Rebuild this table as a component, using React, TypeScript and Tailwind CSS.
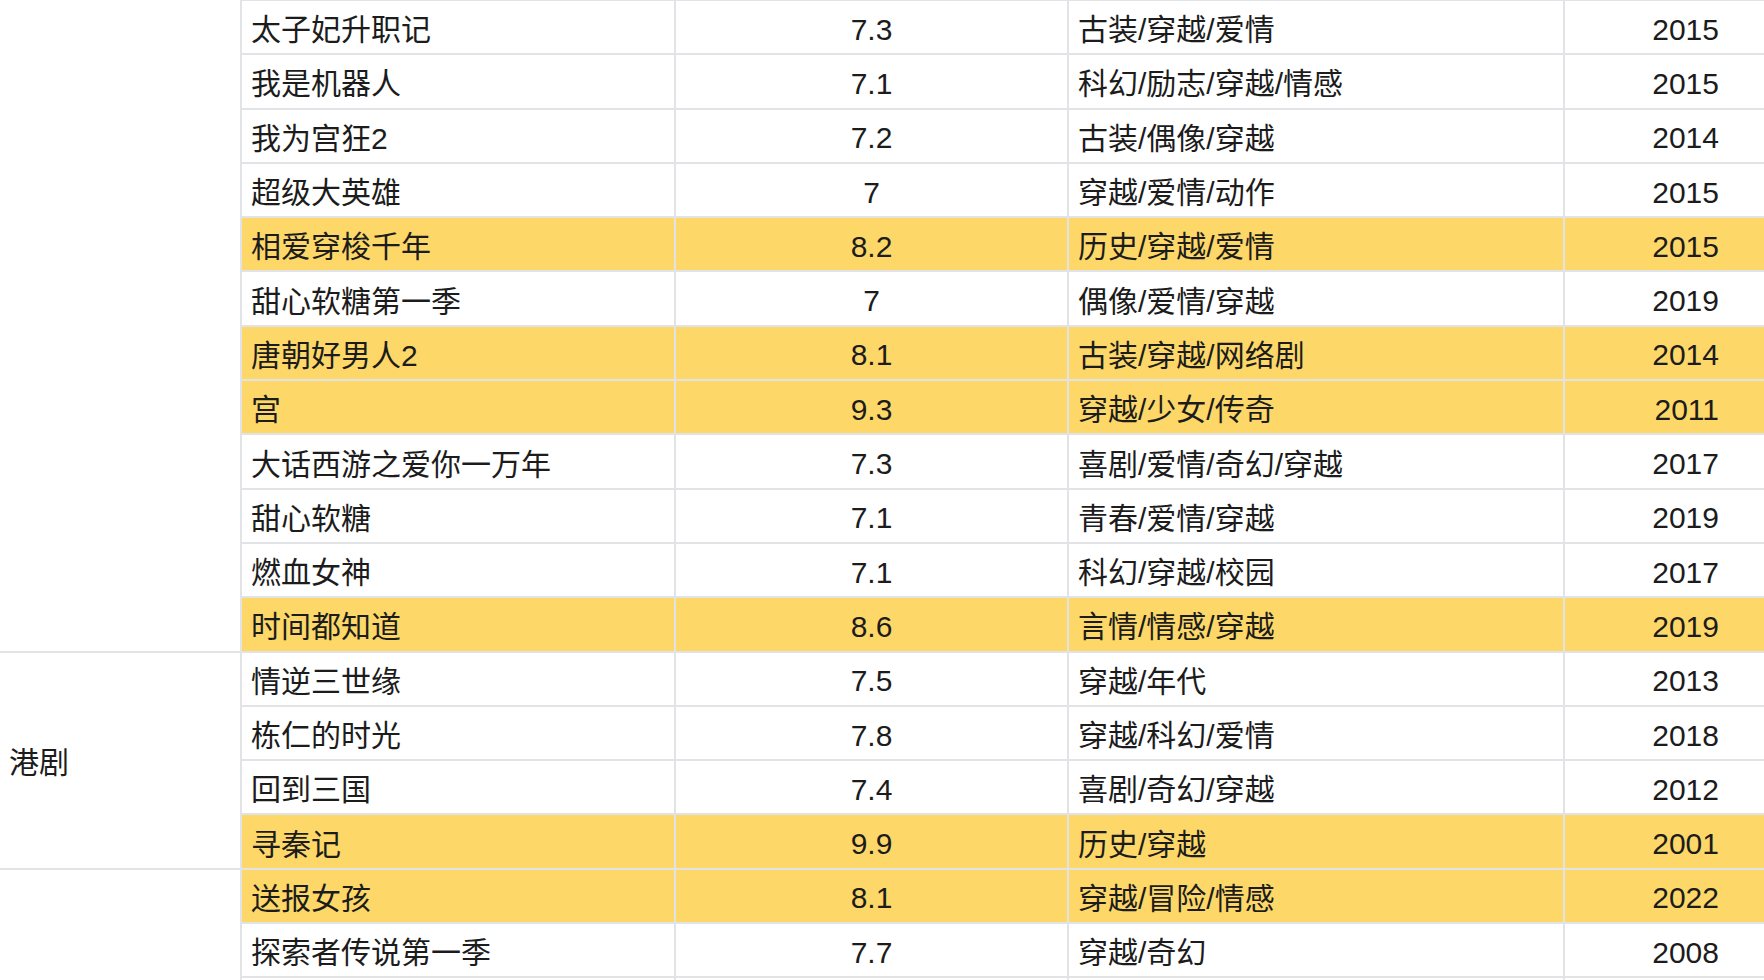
import React from "react";

type Row = { name: string; score: string; genre: string; year: string; hl?: boolean };

const rows: Row[] = [
  { name: "太子妃升职记", score: "7.3", genre: "古装/穿越/爱情", year: "2015" },
  { name: "我是机器人", score: "7.1", genre: "科幻/励志/穿越/情感", year: "2015" },
  { name: "我为宫狂2", score: "7.2", genre: "古装/偶像/穿越", year: "2014" },
  { name: "超级大英雄", score: "7", genre: "穿越/爱情/动作", year: "2015" },
  { name: "相爱穿梭千年", score: "8.2", genre: "历史/穿越/爱情", year: "2015", hl: true },
  { name: "甜心软糖第一季", score: "7", genre: "偶像/爱情/穿越", year: "2019" },
  { name: "唐朝好男人2", score: "8.1", genre: "古装/穿越/网络剧", year: "2014", hl: true },
  { name: "宫", score: "9.3", genre: "穿越/少女/传奇", year: "2011", hl: true },
  { name: "大话西游之爱你一万年", score: "7.3", genre: "喜剧/爱情/奇幻/穿越", year: "2017" },
  { name: "甜心软糖", score: "7.1", genre: "青春/爱情/穿越", year: "2019" },
  { name: "燃血女神", score: "7.1", genre: "科幻/穿越/校园", year: "2017" },
  { name: "时间都知道", score: "8.6", genre: "言情/情感/穿越", year: "2019", hl: true },
  { name: "情逆三世缘", score: "7.5", genre: "穿越/年代", year: "2013" },
  { name: "栋仁的时光", score: "7.8", genre: "穿越/科幻/爱情", year: "2018" },
  { name: "回到三国", score: "7.4", genre: "喜剧/奇幻/穿越", year: "2012" },
  { name: "寻秦记", score: "9.9", genre: "历史/穿越", year: "2001", hl: true },
  { name: "送报女孩", score: "8.1", genre: "穿越/冒险/情感", year: "2022", hl: true },
  { name: "探索者传说第一季", score: "7.7", genre: "穿越/奇幻", year: "2008" },
  { name: "", score: "", genre: "", year: "" },
];

const cjk = { fontFamily: '"Liberation Sans", "Noto Sans CJK SC", sans-serif' };

export default function App() {
  return (
    <div className="w-[1764px] h-[980px] overflow-hidden bg-white text-[#1c1c1c]" style={cjk}>
      <div className="flex -mt-[1px]">
        <div className="w-[240px] shrink-0 flex flex-col pt-[2px]">
          <div className="h-[651.6px] border-b-2 border-[#e2e3e6]" />
          <div className="h-[217.2px] border-b-2 border-[#e2e3e6] flex items-center pl-[9px] pt-[6px] text-[30px] leading-none">
            港剧
          </div>
          <div className="h-[160px]" />
        </div>
        <div className="flex-1 flex flex-col border-t-2 border-[#e2e3e6]">
          {rows.map((r, i) => (
            <div
              key={i}
              className={`h-[54.3px] shrink-0 flex border-b-2 border-[#e2e3e6] ${r.hl ? "bg-[#fdd869]" : "bg-white"}`}
            >
              <div className="w-[434px] shrink-0 border-l-2 border-[#e2e3e6] flex items-center pl-[9px] pt-[6px] text-[30px] leading-none whitespace-nowrap">
                {r.name}
              </div>
              <div className="w-[393px] shrink-0 border-l-2 border-[#e2e3e6] flex items-center justify-center pt-[5px] text-[30px] leading-none">
                {r.score}
              </div>
              <div className="w-[496px] shrink-0 border-l-2 border-[#e2e3e6] flex items-center pl-[9px] pt-[6px] text-[30px] leading-none whitespace-nowrap">
                {r.genre}
              </div>
              <div className="flex-1 border-l-2 border-[#e2e3e6] flex items-center justify-end pr-[45px] pt-[5px] text-[30px] leading-none">
                {r.year}
              </div>
            </div>
          ))}
        </div>
      </div>
    </div>
  );
}
